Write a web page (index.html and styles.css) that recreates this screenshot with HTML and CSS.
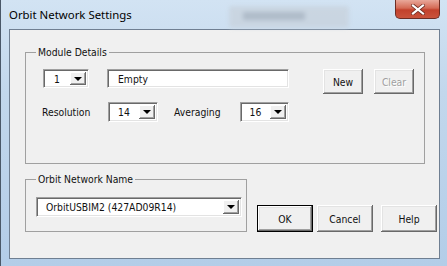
FILE: index.html
```html
<!DOCTYPE html>
<html lang="en">
<head>
  <meta charset="UTF-8">
  <title>Orbit Network Settings</title>
  <link rel="stylesheet" href="styles.css">
</head>
<body>
  <div class="window">
    <!-- Aero title bar -->
    <div class="titlebar">
      <span class="title">Orbit Network Settings</span>
      <div class="ghost"><div class="ghost-field"></div></div>
      <div class="close-btn">
        <svg width="14" height="11" viewBox="0 0 14 11">
          <path d="M2 1.5 L12 9.5 M12 1.5 L2 9.5" stroke="#6e2b20" stroke-width="3.6" stroke-linecap="square"/>
          <path d="M2 1.5 L12 9.5 M12 1.5 L2 9.5" stroke="#ffffff" stroke-width="2.2" stroke-linecap="square"/>
        </svg>
      </div>
    </div>

    <div class="client">
      <fieldset class="group module">
        <legend>Module Details</legend>
        <div class="row row-top">
          <div class="combo combo-module">
            <span class="value center">1</span>
            <span class="drop"><i class="arrow"></i></span>
          </div>
          <div class="textbox">Empty</div>
          <div class="btn btn-new">New</div>
          <div class="btn btn-clear disabled">Clear</div>
        </div>
        <div class="row row-bottom">
          <span class="label">Resolution</span>
          <div class="combo combo-res">
            <span class="value center">14</span>
            <span class="drop"><i class="arrow"></i></span>
          </div>
          <span class="label">Averaging</span>
          <div class="combo combo-avg">
            <span class="value center">16</span>
            <span class="drop"><i class="arrow"></i></span>
          </div>
        </div>
      </fieldset>

      <div class="bottom">
        <fieldset class="group network">
          <legend>Orbit Network Name</legend>
          <div class="combo combo-net">
            <span class="value">OrbitUSBIM2 (427AD09R14)</span>
            <span class="drop"><i class="arrow"></i></span>
          </div>
        </fieldset>
        <div class="actions">
          <div class="btn btn-ok">OK</div>
          <div class="btn btn-cancel">Cancel</div>
          <div class="btn btn-help">Help</div>
        </div>
      </div>
    </div>
  </div>
</body>
</html>
```

FILE: styles.css
```css
* {
  margin: 0;
  padding: 0;
  box-sizing: border-box;
}

body {
  width: 447px;
  height: 266px;
  overflow: hidden;
  background: #9fbcd9;
  font-family: "DejaVu Sans Condensed", "DejaVu Sans", sans-serif;
  font-size: 10.3px;
  color: #111;
}

/* window frame (Aero glass look) */
.window {
  width: 447px;
  height: 266px;
  display: flex;
  flex-direction: column;
  padding: 0 7px 7px 8px;
  border-left: 1px solid #4a5868;
  background: linear-gradient(180deg, #d2e3f3 0%, #c2d7ec 35%, #b3cde8 100%);
}

.titlebar {
  height: 29px;
  display: flex;
  align-items: flex-start;
}

.title {
  font-family: "Noto Sans", "Liberation Sans", sans-serif;
  font-size: 11.4px;
  line-height: 16px;
  margin-top: 7px;
  color: #000;
}

.ghost {
  width: 120px;
  height: 22px;
  margin-left: 97px;
  margin-top: 6px;
  padding: 6px 0 0 14px;
  background: #c9d4df;
  border-radius: 3px;
  filter: blur(2px);
  opacity: 0.85;
}

.ghost-field {
  width: 62px;
  height: 8px;
  background: #aab6c3;
}

.close-btn {
  margin-left: auto;
  width: 45px;
  height: 19px;
  display: flex;
  align-items: center;
  justify-content: center;
  border: 1px solid #6d2d24;
  border-top: none;
  border-radius: 0 0 5px 5px;
  background: linear-gradient(180deg, #e9a89a 0%, #d46a55 45%, #c2412c 55%, #c9533c 100%);
}

/* dialog body */
.client {
  flex: 1;
  background: #f0f0f0;
  border: 1px solid #6f7f92;
  padding: 15px 0 0 15px;
}

.group {
  border: 1px solid #a0a0a0;
  min-width: 0;
}

.group legend {
  margin-left: 10px;
  padding: 0 2px;
  line-height: 14px;
}

.module {
  width: 400px;
  padding: 0 0 41px 0;
}

.row {
  display: flex;
  align-items: flex-start;
}

.row-top {
  margin-top: 10px;
  padding-left: 17px;
}

.row-bottom {
  margin-top: 8px;
  padding-left: 16px;
  align-items: center;
}

.label {
  width: 66px;
}

/* sunken fields */
.combo,
.textbox {
  display: flex;
  height: 20px;
  background: #fff;
  border: 1px solid;
  border-color: #a0a0a0 #fff #fff #a0a0a0;
  box-shadow: inset 1px 1px 0 #696969, inset -1px -1px 0 #e3e3e3;
}

.combo .value {
  flex: 1;
  padding: 2px 0 0 9px;
  line-height: 14px;
  white-space: nowrap;
}

.combo .value.center {
  padding-left: 0;
  text-align: center;
}

.combo .drop {
  width: 16px;
  margin: 2px 2px 2px 0;
  display: flex;
  align-items: center;
  justify-content: center;
  background: #f0f0f0;
  box-shadow: inset -1px -1px 0 #696969, inset 1px 1px 0 #fff, inset -2px -2px 0 #a0a0a0;
}

.arrow {
  width: 0;
  height: 0;
  border-left: 4px solid transparent;
  border-right: 4px solid transparent;
  border-top: 4px solid #000;
}

.combo-module {
  width: 46px;
  height: 19px;
}

.combo-module .value {
  padding-left: 4px;
}

.textbox {
  width: 182px;
  height: 19px;
  margin-left: 18px;
  padding: 2px 0 0 10px;
  line-height: 14px;
}

.combo-res {
  width: 50px;
  margin-right: 16px;
}

.combo-avg {
  width: 49px;
}

/* raised buttons */
.btn {
  display: flex;
  align-items: center;
  justify-content: center;
  background: #f0f0f0;
  box-shadow: inset -1px -1px 0 #696969, inset 1px 1px 0 #fff, inset -2px -2px 0 #a0a0a0, inset 2px 2px 0 #e3e3e3;
}

.btn-new {
  width: 40px;
  height: 25px;
  margin-left: 34px;
}

.btn-clear {
  width: 40px;
  height: 25px;
  margin-left: 11px;
}

.btn.disabled {
  color: #a0a0a0;
  text-shadow: 1px 1px 0 #fff;
}

.bottom {
  display: flex;
  align-items: flex-start;
  margin-top: 8px;
}

.network {
  width: 222px;
  padding: 0 4px 14px 10px;
}

.network legend {
  margin-left: 0;
}

.combo-net {
  margin-top: 11px;
  width: 206px;
}

.actions {
  display: flex;
  margin-top: 33px;
  margin-left: 10px;
}

.actions .btn {
  width: 56px;
  height: 27px;
}

.btn-ok {
  border: 1px solid #000;
}

.btn-cancel {
  margin-left: 4px;
}

.btn-help {
  margin-left: 8px;
}
```
